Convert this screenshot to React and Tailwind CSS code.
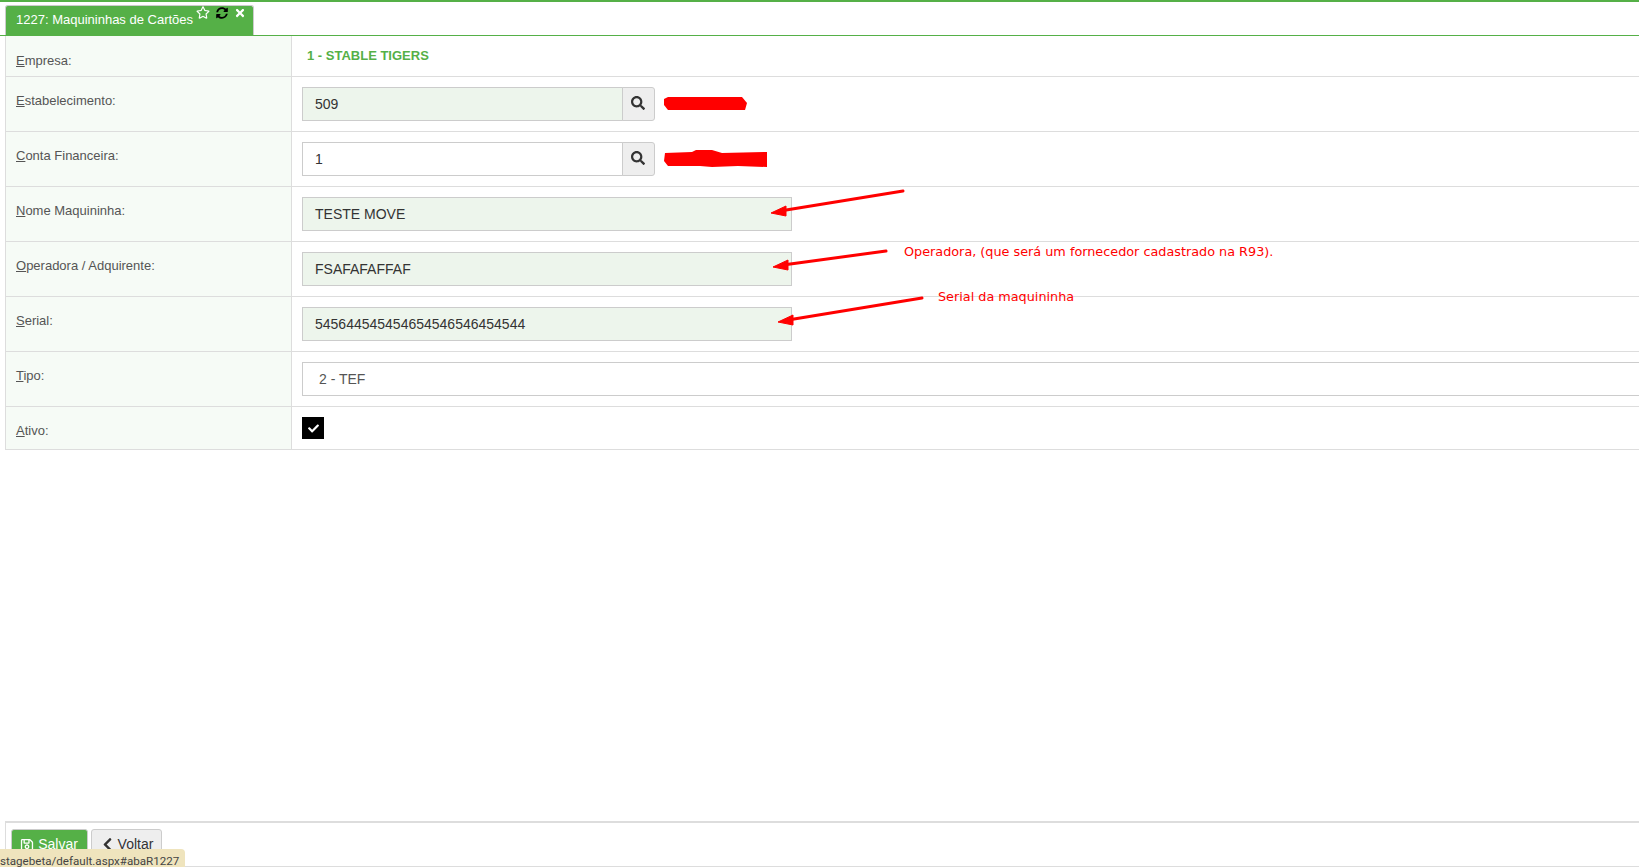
import React from "react";
import { FaCheck, FaChevronLeft, FaRegSave, FaRegStar, FaSearch, FaSyncAlt, FaTimes } from "react-icons/fa";

const Label = ({ first, rest, pad = "pt-[14px]" }) => (
    <div className={`w-[286px] shrink-0 bg-[#f6fbf6] border-r border-[#ddd] pl-[10px] text-[13px] text-[#555] ${pad}`}>
        <u>{first}</u>{rest}
    </div>
);

const Row = ({ first, rest, pad, height = "h-[55px]", children }) => (
    <div className={`flex ${height} border-b border-[#ddd]`}>
        <Label first={first} rest={rest} pad={pad} />
        <div className="flex-1 min-w-0 pl-[10px] pt-[10px]">{children}</div>
    </div>
);

const Input = ({ value, green = true, width = "w-[490px]" }) => (
    <div className={`${width} h-[34px] border border-[#ccc] pl-3 flex items-center text-[14px] text-[#333] ${green ? "bg-[#edf5ec]" : "bg-white"}`}>
        {value}
    </div>
);

const Lookup = ({ value, green }) => (
    <div className="flex w-[353px]">
        <div className={`flex-1 h-[34px] border border-[#ccc] pl-3 flex items-center text-[14px] text-[#333] ${green ? "bg-[#edf5ec]" : "bg-white"}`}>
            {value}
        </div>
        <div className="w-[33px] h-[34px] -ml-px border border-[#ccc] rounded-r-[3px] bg-[#eee] flex items-center justify-center text-[#333] pb-[2px] pr-[2px]">
            <FaSearch className="w-[14px] h-[14px]" />
        </div>
    </div>
);

// the red marks somebody drew on top of the screen
const Marks = () => (
    <svg className="absolute left-0 top-0 pointer-events-none" width="1639" height="867">
        <path d="M664 97 L668 95 L742 95 L747 101 L745 108 L668 108 L664 103 Z" fill="#f00" />
        <path d="M665 151 L692 150 L696 148 L712 148 L722 151 L767 150 L767 165 L738 164 L712 165 L700 164 L668 164 L664 159 Z" fill="#f00" />
        <path d="M903 189 L780 209" stroke="#f00" strokeWidth="3" strokeLinecap="round" />
        <path d="M771 211 L786 204 L786 214 Z" fill="#f00" stroke="#f00" />
        <path d="M886 249 L783 263" stroke="#f00" strokeWidth="3" strokeLinecap="round" />
        <path d="M773 265 L788 258 L788 268 Z" fill="#f00" stroke="#f00" />
        <path d="M922 296 L788 318" stroke="#f00" strokeWidth="3" strokeLinecap="round" />
        <path d="M778 320 L793 313 L793 323 Z" fill="#f00" stroke="#f00" />
    </svg>
);

const App = () => {
    return (
        <div className="relative h-[867px] w-[1639px] overflow-hidden bg-white flex flex-col font-['Liberation_Sans',sans-serif] border-t-2 border-[#55b047]">
            {/* Tab */}
            <div className="h-[34px] shrink-0 pl-[5px] pt-[3px] border-b border-[#55b047]">
                <div className="relative w-[249px] h-[30px] bg-[#55b047] border border-[#ccc] border-b-0 rounded-t-[3px] text-white text-[13px] pl-[10px] pt-[4px] font-medium">
                    1227: Maquininhas de Cartões
                    <FaRegStar className="absolute left-[190px] top-[0px] w-[14px] h-[13px]" />
                    <FaSyncAlt className="absolute left-[210px] top-[1px] w-[12px] h-[12px] text-black" />
                    <FaTimes className="absolute left-[228px] top-[1px] w-[12px] h-[12px]" />
                </div>
            </div>

            {/* Form */}
            <div className="ml-[5px] border-l border-[#ddd]">
                <div className="flex h-[41px] border-b border-[#ddd]">
                    <Label first="E" rest="mpresa:" pad="pt-[15px]" />
                    <div className="pl-[15px] pt-[10px] text-[13px] font-bold text-[#55b047]">1 - STABLE TIGERS</div>
                </div>
                <Row first="E" rest="stabelecimento:"><Lookup value="509" green /></Row>
                <Row first="C" rest="onta Financeira:"><Lookup value="1" /></Row>
                <Row first="N" rest="ome Maquininha:"><Input value="TESTE MOVE" /></Row>
                <Row first="O" rest="peradora / Adquirente:"><Input value="FSAFAFAFFAF" /></Row>
                <Row first="S" rest="erial:"><Input value="545644545454654546546454544" /></Row>
                <Row first="T" rest="ipo:">
                    <div className="h-[34px] border border-[#ccc] border-r-0 pl-[16px] flex items-center text-[14px] text-[#555]">2 - TEF</div>
                </Row>
                <Row first="A" rest="tivo:" pad="pt-[14px]" height="h-[43px]">
                    <div className="w-[22px] h-[22px] bg-black text-white flex items-center justify-center">
                        <FaCheck className="w-[11px] h-[11px]" />
                    </div>
                </Row>
            </div>

            {/* Footer buttons */}
            <div className="mt-auto ml-[5px] h-[46px] border-t-2 border-b border-[#ddd] border-l pl-[5px] pt-[6px] flex gap-[3px] items-start">
                <div className="h-[34px] w-[77px] bg-[#55b047] border border-[#ccc] rounded-[3px] text-white text-[14px] flex items-center justify-center gap-[4px] pb-[3px] pr-[1px]">
                    <FaRegSave className="w-[14px] h-[14px]" /> Salvar
                </div>
                <div className="h-[34px] w-[71px] bg-[#eee] border border-[#ccc] rounded-[3px] text-[#333] text-[14px] flex items-center justify-center gap-[3px] pb-[3px]">
                    <FaChevronLeft className="w-[15px] h-[15px]" /> Voltar
                </div>
            </div>
            <div className="absolute left-0 bottom-0 h-[18px] w-[185px] bg-[#efe4bd] rounded-tr-[4px] text-[11.6px] leading-[24px] text-[#444] overflow-hidden whitespace-nowrap font-['Roboto',sans-serif]">
                stagebeta/default.aspx#abaR1227
            </div>

            {/* Annotations */}
            <Marks />
            <div className="absolute left-[904px] top-[241px] text-[12.8px] leading-[18px] text-[#f00] whitespace-nowrap font-['DejaVu_Sans',sans-serif]">
                Operadora, (que será um fornecedor cadastrado na R93).
            </div>
            <div className="absolute left-[938px] top-[286px] text-[12.8px] leading-[18px] text-[#f00] whitespace-nowrap font-['DejaVu_Sans',sans-serif]">
                Serial da maquininha
            </div>
        </div>
    );
};

export default App;
